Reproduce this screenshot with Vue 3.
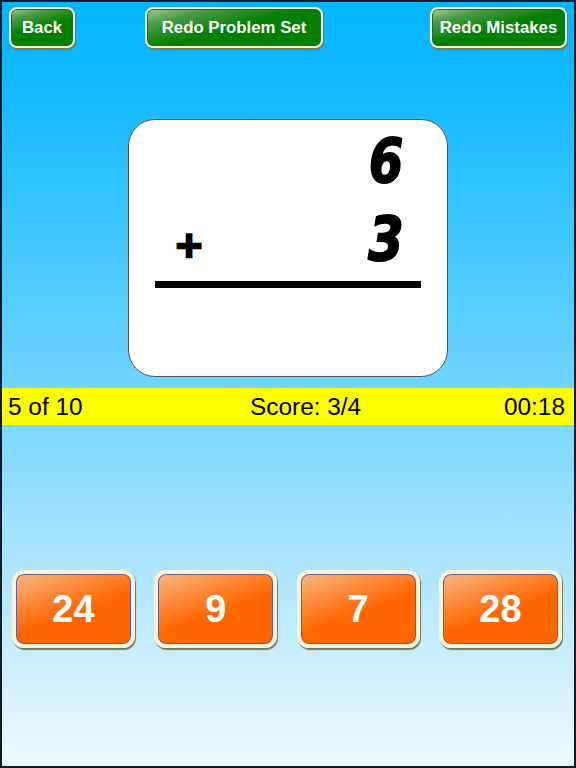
<script setup>
const top = [
  { label: 'Back', kind: 'back' },
  { label: 'Redo Problem Set', kind: 'redo-set' },
  { label: 'Redo Mistakes', kind: 'redo-mistakes' }
]
const answers = [24, 9, 7, 28]
</script>

<template>
  <div class="screen">
    <nav class="topbar">
      <button v-for="b in top" :key="b.label" class="btn green" :class="b.kind">{{ b.label }}</button>
    </nav>
    <section class="card">
      <div class="row first"><span class="digit six">6</span></div>
      <div class="row second">
        <span class="plus">+</span>
        <span class="digit three">3</span>
      </div>
      <div class="rule"></div>
    </section>
    <div class="status">
      <span>5 of 10</span>
      <span>Score: 3/4</span>
      <span class="time">00:18</span>
    </div>
    <div class="answers">
      <button v-for="a in answers" :key="a" class="btn orange">{{ a }}</button>
    </div>
  </div>
</template>

<style>
html, body { margin: 0; padding: 0; }
</style>

<style scoped>
.screen {
  box-sizing: border-box;
  width: 576px;
  height: 768px;
  border: 2px solid #0b1c2c;
  background: linear-gradient(180deg, #00b4ff 0%, #19bbff 14%, #6fd4ff 50%, #a9e4ff 72%, #eef9ff 100%);
  font-family: "Liberation Sans", Arial, sans-serif;
  display: flex;
  flex-direction: column;
  overflow: hidden;
}
.topbar {
  display: flex;
  padding: 5px 7px 0;
}
.btn {
  box-sizing: border-box;
  border: 2px solid #f3f4da;
  font-family: inherit;
  font-weight: 700;
  color: #fff;
  padding: 0;
}
.green {
  height: 41px;
  border-radius: 8px;
  font-size: 16.8px;
  background: linear-gradient(165deg, #a5cc9d 0%, #4a9a48 20%, #008000 50%);
  box-shadow: 1px 1.5px 1px #77794f, inset 0 0 0 1px #1a6a2c;
}
.back { width: 66px; }
.redo-set { width: 178px; margin-left: 70px; }
.redo-mistakes { width: 137px; margin-left: 107px; }
.card {
  box-sizing: border-box;
  width: 320px;
  height: 258px;
  margin: 71px 0 0 126px;
  padding: 0 26px;
  background: #fff;
  border: 1.5px solid #555;
  border-radius: 27px;
  display: flex;
  flex-direction: column;
}
.row {
  display: flex;
  justify-content: space-between;
  align-items: center;
  height: 78px;
}
.first {
  justify-content: flex-end;
  margin-top: 2px;
}
.digit {
  font-family: "DejaVu Sans", sans-serif;
  font-weight: 700;
  font-style: italic;
  font-size: 60px;
  line-height: 1;
  width: 48px;
  margin-right: 11px;
  text-align: center;
  color: #000;
  -webkit-text-stroke: 2px #000;
}
.six {
  transform: scale(0.82, 1);
}
.three {
  transform: scale(0.85, 1);
}
.plus {
  font-family: "DejaVu Sans", sans-serif;
  font-weight: 700;
  font-size: 36px;
  line-height: 1;
  margin: 12px 0 0 19px;
  color: #000;
  -webkit-text-stroke: 2.5px #000;
}
.rule {
  height: 7px;
  background: #000;
  margin-top: 3px;
}
.status {
  display: grid;
  grid-template-columns: 242px auto 1fr;
  align-items: center;
  height: 37px;
  margin-top: 11px;
  padding: 0 9px 0 6px;
  background: #ffff00;
  color: #000;
  font-size: 24.4px;
}
.time { text-align: right; }
.answers {
  display: flex;
  gap: 19.3px;
  margin: 145px 0 0 10px;
}
.orange {
  width: 123px;
  height: 78px;
  border-width: 4px;
  border-radius: 12px;
  font-size: 38px;
  background: linear-gradient(160deg, #f3b884 0%, #fd8c3e 28%, #ff6600 54%);
  box-shadow: 1px 1.5px 1px #77794f, inset 0 0 0 1px #6f5a9c;
}
</style>
